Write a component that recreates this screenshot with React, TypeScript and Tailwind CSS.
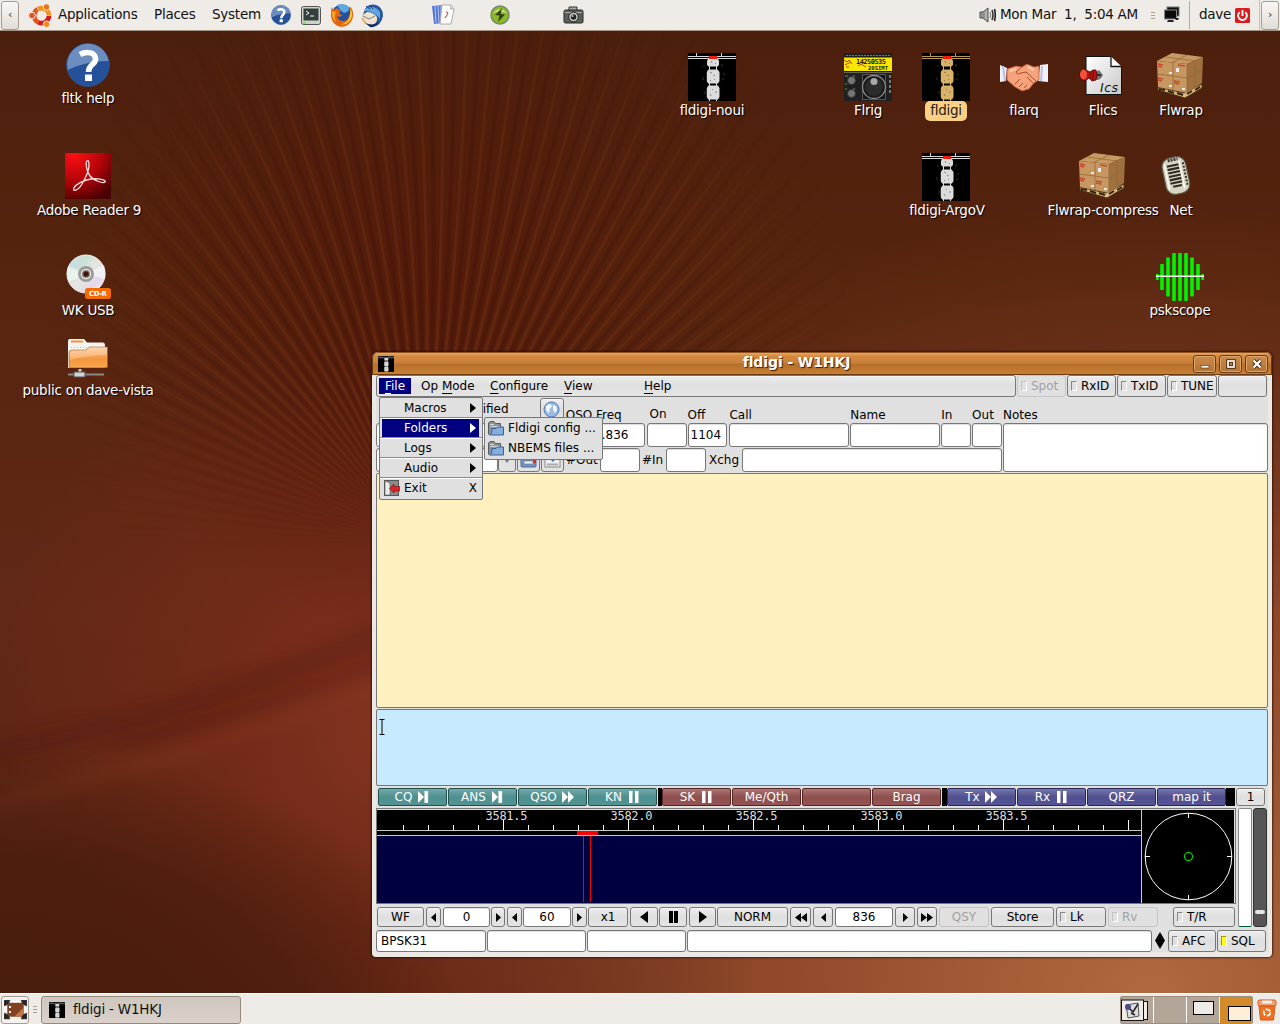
import React from "react";

type Kids = { children?: React.ReactNode; className?: string };

/* ---------- wallpaper ---------- */

function Wallpaper() {
  const rays: React.ReactNode[] = [];
  for (let i = 0; i < 150; i++) {
    const deg = 140 + i * 1.4;
    const a = (deg * Math.PI) / 180;
    const r = 640;
    const ex = 420 + Math.cos(a) * r;
    const ey = 540 + Math.sin(a) * r;
    const mx = 420 + Math.cos(a) * 280 + 25;
    const my = 540 + Math.sin(a) * 280 + 10;
    rays.push(
      <path key={i} d={`M420 540Q${mx} ${my} ${ex} ${ey}`} stroke={i % 2 ? "#2e0c05" : "#8a4a18"} strokeWidth={i % 2 ? 4 : 3} fill="none" />
    );
  }
  return (
    <svg className="absolute inset-0" width="1280" height="1024" viewBox="0 0 1280 1024">
      <defs>
        <linearGradient id="base" x1="0" y1="0" x2="0" y2="1">
          <stop offset="0" stopColor="#4b1e0c" />
          <stop offset=".3" stopColor="#57250f" />
          <stop offset=".6" stopColor="#612817" />
          <stop offset="1" stopColor="#532211" />
        </linearGradient>
        <radialGradient id="red" gradientUnits="userSpaceOnUse" cx="400" cy="730" r="420">
          <stop offset="0" stopColor="#853521" />
          <stop offset=".45" stopColor="#772b1a" stopOpacity=".75" />
          <stop offset="1" stopColor="#772b1a" stopOpacity="0" />
        </radialGradient>
        <radialGradient id="glow" gradientUnits="userSpaceOnUse" cx="1150" cy="1000" r="800">
          <stop offset="0" stopColor="#b06a41" />
          <stop offset=".5" stopColor="#944c2c" stopOpacity=".9" />
          <stop offset="1" stopColor="#7b3820" stopOpacity="0" />
        </radialGradient>
        <radialGradient id="corner" gradientUnits="userSpaceOnUse" cx="0" cy="0" r="1" gradientTransform="translate(20 1020) scale(440 270)">
          <stop offset="0" stopColor="#4a1c0b" />
          <stop offset=".6" stopColor="#4c1d0c" stopOpacity=".85" />
          <stop offset="1" stopColor="#4c1d0c" stopOpacity="0" />
        </radialGradient>
        <radialGradient id="fade" gradientUnits="userSpaceOnUse" cx="450" cy="330" r="400">
          <stop offset="0" stopColor="#fff" stopOpacity=".24" />
          <stop offset=".6" stopColor="#fff" stopOpacity=".16" />
          <stop offset="1" stopColor="#fff" stopOpacity="0" />
        </radialGradient>
        <radialGradient id="core" gradientUnits="userSpaceOnUse" cx="420" cy="300" r="330">
          <stop offset="0" stopColor="#541709" stopOpacity=".75" />
          <stop offset="1" stopColor="#541709" stopOpacity="0" />
        </radialGradient>
        <linearGradient id="cut" x1="0" y1="0" x2="0" y2="1">
          <stop offset=".38" stopColor="#fff" />
          <stop offset=".54" stopColor="#fff" stopOpacity="0" />
        </linearGradient>
        <mask id="rayMask" maskUnits="userSpaceOnUse" x="0" y="0" width="1280" height="1024">
          <rect width="1280" height="1024" fill="url(#fade)" />
        </mask>
        <mask id="cutMask" maskUnits="userSpaceOnUse" x="0" y="0" width="1280" height="1024">
          <rect width="1280" height="1024" fill="url(#cut)" />
        </mask>
        <filter id="soft" x="-20%" y="-60%" width="140%" height="220%"><feGaussianBlur stdDeviation="8" /></filter>
      </defs>
      <rect width="1280" height="1024" fill="url(#base)" />
      <rect width="1280" height="1024" fill="url(#red)" />
      <rect width="1280" height="1024" fill="url(#glow)" />
      <rect width="1280" height="1024" fill="url(#core)" />
      <rect width="1280" height="1024" fill="url(#corner)" />
      <g mask="url(#cutMask)"><g mask="url(#rayMask)">{rays}</g></g>
      <path d="M-20 745Q180 705 380 622V645Q220 715-20 765Z" fill="#4e180c" opacity=".35" filter="url(#soft)" />
      <path d="M-20 800Q180 745 380 665V690Q220 760-20 815Z" fill="#a14a2c" opacity=".12" filter="url(#soft)" />
      <path d="M120 735Q260 705 380 655V670Q250 725 120 750Z" fill="#4a160b" opacity=".3" filter="url(#soft)" />
    </svg>
  );
}

/* ---------- small drawings ---------- */

function SignalArt({ size, tone = "#dcdcdc", line = "#fff" }: { size: number; tone?: string; line?: string }) {
  return (
    <svg width={size} height={size} viewBox="0 0 48 48">
      <rect width="48" height="48" fill="#000" />
      <path d="M0 3.500H48M0 5.500H48M8.500 0V3M33.500 0V3" stroke={line} strokeWidth="1" opacity=".85" />
      <path d="M20 6H30L31 8V12L29.500 13.500H20.500L19 12V8ZM20.500 16.500H29.500L31.500 19V28L30 30.500H20L18.800 28V19ZM20.500 32.500H30L31.500 35V44L30 46.500H20L18.800 44V35Z" fill={tone} />
      <path d="M21.500 6V48M28.500 6V48" stroke={tone} strokeWidth="1" />
      <path d="M23 8l1 2M27 10l1 1M22 19l2 1M25 22l2 1M26 26l1 1M22 27l1 1M24 36l1 1M28 38v2M22 41l1 2" stroke="#555" strokeWidth=".9" opacity=".7" />
      <path d="M16 12v2M34 11v3M15 24v3M35 25v2M17 38v3M36 20v2" stroke="#555" strokeWidth="1" opacity=".6" />
      <rect x="21" y="3" width="8" height="3" fill="#f21b0c" />
    </svg>
  );
}

function HelpArt({ size }: { size: number }) {
  return (
    <svg width={size} height={size} viewBox="0 0 44 44">
      <circle cx="22" cy="22" r="21.300" fill="#24519a" stroke="#2d5796" />
      <path d="M1.500 25A20.500 20.500 0 0 1 42.500 18Q20 18 1.500 27Z" fill="#8ba6d0" opacity=".7" />
      <path d="M14 11.500Q17.500 9.500 21.500 9.500C30 9.500 31.500 17 27 21 24.500 23.200 22.500 24 22.500 29" fill="none" stroke="#fff" strokeWidth="5.500" />
      <rect x="19" y="31.500" width="7" height="6.500" fill="#fff" />
    </svg>
  );
}

function AdobeArt() {
  return (
    <svg width="46" height="46" viewBox="0 0 46 46">
      <defs>
        <radialGradient id="ad" cx=".2" cy="0" r="1.100">
          <stop offset="0" stopColor="#ff1014" /><stop offset=".55" stopColor="#b40509" /><stop offset="1" stopColor="#4a0103" />
        </radialGradient>
      </defs>
      <rect width="46" height="46" fill="url(#ad)" />
      <path d="M22 8C20 10 22 19 25 23S38 31 40 29 33 25 26 26 11 31 9 35 13 38 17 31 24 18 24 13 23.500 7 22 8Z" fill="none" stroke="#f3dede" strokeWidth="1.300" />
    </svg>
  );
}

function DiscArt() {
  return (
    <svg width="48" height="46" viewBox="0 0 48 46">
      <defs>
        <linearGradient id="cd" x1="0" y1="0" x2="1" y2="1">
          <stop offset="0" stopColor="#cdd8ee" /><stop offset=".3" stopColor="#c7e1d6" /><stop offset=".5" stopColor="#e6e6e0" /><stop offset=".75" stopColor="#e5d7ea" /><stop offset="1" stopColor="#f6f6f6" />
        </linearGradient>
      </defs>
      <circle cx="22" cy="20" r="19" fill="url(#cd)" stroke="#f3f3f3" />
      <path d="M22 20L40 11Q42 16 41 25ZM22 20L5 28Q2 22 4 12Z" fill="#fff" opacity=".55" />
      <circle cx="22" cy="20" r="8" fill="#999b9d" />
      <circle cx="22" cy="20" r="4.500" fill="#6a5448" stroke="#e8e8e8" strokeWidth="1.400" />
      <circle cx="22" cy="20" r="2.300" fill="#3a150a" />
      <rect x="21" y="34" width="26" height="11" rx="2.500" fill="#f66a05" />
      <text x="34" y="42" textAnchor="middle" fontSize="7" fontWeight="700" fill="#fff" fontFamily="DejaVu Sans, sans-serif" textLength="18">CD-R</text>
    </svg>
  );
}

function NetFolderArt() {
  return (
    <svg width="42" height="40" viewBox="0 0 42 40">
      <defs>
        <linearGradient id="nf" x1="0" y1="0" x2="0" y2="1"><stop offset="0" stopColor="#fbc795" /><stop offset=".6" stopColor="#f5963e" /><stop offset="1" stopColor="#f8a84f" /></linearGradient>
      </defs>
      <path d="M1 29V2Q1 0 3 0H17L20 3.500H36Q38 3.500 38 6V29Z" fill="#f5f3ef" />
      <rect x="4" y="1.500" width="12" height="2" fill="#f58f3f" />
      <path d="M4 8.500H36" stroke="#c0bbb2" strokeDasharray="1 2" />
      <path d="M2 28.500V14Q2 11 5 11H19L22.500 8H40.500V28.500Z" fill="url(#nf)" stroke="#9b6130" strokeWidth=".6" />
      <path d="M3 21Q20 16 40 16V8.500H23L19 11.500H5Q3 12 3 14Z" fill="#fff" opacity=".25" />
      <path d="M1 35.500H37" stroke="#888" strokeWidth="2" />
      <path d="M13 30V34" stroke="#ccc" strokeWidth="3" />
      <rect x="7" y="33" width="11" height="5" fill="#d3d3d3" stroke="#555" />
    </svg>
  );
}

function RigArt() {
  return (
    <svg width="48" height="48" viewBox="0 0 48 48">
      <rect width="48" height="48" fill="#202020" />
      <path d="M2 2.500H46" stroke="#777" strokeWidth="1.200" strokeDasharray="2 1" />
      <rect y="4.500" width="48" height="13.500" fill="#f8e800" />
      <path d="M0 7l3 2 2-2 3 4M1 12l6-3M2 14h3M14 13l3-2 5 3" stroke="#b3471d" fill="none" />
      <text x="12" y="10.500" fontSize="7" fontWeight="700" fill="#222" fontFamily="DejaVu Sans Mono, monospace" textLength="30">14250535</text>
      <text x="24" y="17" fontSize="5.500" fontWeight="700" fill="#222" fontFamily="DejaVu Sans Mono, monospace" textLength="20">20SIMT</text>
      <rect x="0" y="19" width="48" height="1" fill="#666" />
      <rect x="18.500" y="21.500" width="23" height="25" fill="#191919" stroke="#555" />
      <circle cx="30" cy="34" r="11.500" fill="#1b1b1b" stroke="#8b8b8b" strokeWidth="1.300" />
      <circle cx="30" cy="34" r="9" fill="#2c2c2c" /><circle cx="30" cy="28.500" r="3.500" fill="#a9a9a9" />
      <circle cx="7.500" cy="27.500" r="4" fill="#777" stroke="#333" /><circle cx="7.500" cy="40.500" r="4" fill="#777" stroke="#333" />
      <path d="M46 22v3M46 27v3M46 32v3M46 37v3" stroke="#7a7a7a" strokeWidth="2" />
      <path d="M1 23h3M9 23h2M1 36h2M9 36h2M1 31h2" stroke="#6c9a43" />
    </svg>
  );
}

function HandsArt() {
  return (
    <svg width="48" height="28" viewBox="0 0 48 28">
      <path d="M0 1L7 4 6 17 0 18Z" fill="#eef0fa" /><path d="M48 0L40 1 38 17 48 18Z" fill="#eef0fa" />
      <path d="M3 2l2 15M42 2l-1 15" stroke="#b9bfe0" strokeWidth="2" />
      <path d="M7 5L16 2 22 3 27 0 34 3 39 2 39 16 34 19 29 25 22 27 15 23 7 16Z" fill="#f6a27c" stroke="#b8552e" strokeWidth=".8" />
      <path d="M22 3L16 8Q17 11 21 9L26 8 36 17M15 20l5-5M19 23l4-4M24 24l3-3M27 13l6 6" fill="none" stroke="#a94c28" strokeWidth="1" />
      <path d="M10 7L16 5M28 3L34 6" stroke="#ffd0b2" strokeWidth="2" />
    </svg>
  );
}

function IcsArt() {
  return (
    <svg width="44" height="40" viewBox="0 0 44 40">
      <defs><linearGradient id="pg" x1="0" y1="0" x2="1" y2="1"><stop offset="0" stopColor="#fff" /><stop offset="1" stopColor="#c8c8c8" /></linearGradient></defs>
      <path d="M7 .5H32L42.500 11V38.500H7Z" fill="url(#pg)" stroke="#111" />
      <path d="M32 .5V10.500H42.500" fill="#fff" stroke="#111" strokeWidth="1.300" />
      <path d="M10 21Q20 28 24 19L20 14Z" fill="#000" opacity=".5" />
      <path d="M16 19H22" stroke="#333" strokeWidth="2" />
      <path d="M1 18Q2 12 7 14L11 16 14 14 17 14 18 19 17 24 13 25 10 22 6 25Q1 24 1 18Z" fill="#b5170e" stroke="#500" strokeWidth=".8" />
      <path d="M11 16V22M14 14V24" stroke="#6d0b06" />
      <ellipse cx="4.500" cy="18.500" rx="3.500" ry="5" fill="#f3513d" />
      <text x="21" y="36" fontSize="12.500" fontStyle="italic" fill="#111" fontFamily="DejaVu Sans, sans-serif" textLength="18">Ics</text>
    </svg>
  );
}

function BoxesArt() {
  return (
    <svg width="48" height="46" viewBox="0 0 48 46">
      <path d="M2 34L28 40 46 31 46 35 29 45 2 37Z" fill="#d8bc80" stroke="#4a3318" />
      <path d="M3 36l6 1M12 38l6 2M21 40l6 2M31 41l5-3M39 37l5-3" stroke="#33200d" strokeWidth="2" />
      <path d="M1 8L16 0 47 4 31 11Z" fill="#c79a63" />
      <path d="M1 8L31 11V40L2 34Z" fill="#c69760" />
      <path d="M31 11L47 4 46 30 31 40Z" fill="#a0713e" />
      <path d="M17 9.500V37M1 21L31 25 46.500 17M9 4L39 8M31 2L16 9.500M39 8V35M31 11V40" stroke="#8f6436" strokeWidth=".7" fill="none" />
      <path d="M2 11l5 1M2 13l4 1M2 25l5 1M2 27l4 1M18 28l6 1M18 30l5 1M22 12l7 1" stroke="#c64a32" strokeWidth="1.300" />
      <rect x="20" y="15" width="3" height="4" fill="#eee" /><rect x="13" y="19" width="3" height="2" fill="#eee" /><rect x="13" y="32" width="3" height="2" fill="#eee" /><rect x="26" y="35" width="3" height="2" fill="#eee" />
    </svg>
  );
}

function MicArt() {
  return (
    <svg width="30" height="40" viewBox="0 0 30 40">
      <rect x="3" y="1" width="24" height="37" rx="9" fill="#d8d4c4" stroke="#5b5647" strokeWidth="1.200" transform="rotate(-12 15 20)" />
      <g transform="rotate(-12 15 20)">
        <path d="M10 3.500H20" stroke="#37352b" strokeWidth="3" strokeDasharray="2 1" />
        <path d="M8 9h12M8 12.500h12M8 16h12M8 19.500h12M8 23h12M8 26.500h12M10 30h9" stroke="#2d2b22" strokeWidth="2.100" />
        <path d="M6 6V32M21 5V34" stroke="#fffef2" strokeWidth="1.500" />
        <path d="M24.500 8V32" stroke="#37352b" strokeWidth="2" strokeDasharray="2 1.500" />
      </g>
    </svg>
  );
}

function ScopeArt() {
  const bars: [number, number][] = [[1, 3], [6, 13], [12, 19.500], [18, 24], [24, 24], [30, 24], [36, 19.500], [42, 13], [47, 3]];
  return (
    <svg width="48" height="48" viewBox="0 0 48 48">
      {bars.map(([x, h]) => (
        <rect key={x} x={x - 1.8} y={24 - h} width="3.600" height={h * 2} rx=".8" fill="#00f400" />
      ))}
      <rect y="22.500" width="48" height="1.500" fill="#f2fff0" />
    </svg>
  );
}

/* ---------- desktop icons ---------- */

const desktopIcons: { x: number; y: number; h: number; label: string; art: React.ReactNode; sel?: boolean; dx?: string }[] = [
  { x: 88, y: 43, h: 45, label: "fltk help", art: <HelpArt size={44} /> },
  { x: 89, y: 153, h: 47, label: "Adobe Reader 9", art: <AdobeArt />, dx: "-ml-[2px]" },
  { x: 88, y: 254, h: 46, label: "WK USB", art: <DiscArt /> },
  { x: 88, y: 339, h: 41, label: "public on dave-vista", art: <NetFolderArt /> },
  { x: 712, y: 53, h: 47, label: "fldigi-noui", art: <SignalArt size={48} /> },
  { x: 868, y: 53, h: 47, label: "Flrig", art: <RigArt /> },
  { x: 946, y: 53, h: 48, label: "fldigi", art: <SignalArt size={48} tone="#d9b26a" line="#d9b26a" />, sel: true },
  { x: 1024, y: 64, h: 36, label: "flarq", art: <HandsArt /> },
  { x: 1103, y: 56, h: 44, label: "Flics", art: <IcsArt />, dx: "-ml-[5px]" },
  { x: 1181, y: 53, h: 47, label: "Flwrap", art: <BoxesArt />, dx: "-ml-[2px]" },
  { x: 947, y: 153, h: 47, label: "fldigi-ArgoV", art: <SignalArt size={48} />, dx: "-ml-[2px]" },
  { x: 1103, y: 153, h: 47, label: "Flwrap-compress", art: <BoxesArt />, dx: "-ml-[2px]" },
  { x: 1181, y: 156, h: 44, label: "Net", art: <MicArt />, dx: "-ml-[10px]" },
  { x: 1180, y: 253, h: 47, label: "pskscope", art: <ScopeArt /> },
];

function DesktopIcon({ i }: { i: (typeof desktopIcons)[number] }) {
  return (
    <div className="absolute flex w-[160px] -translate-x-1/2 flex-col items-center" style={{ left: i.x, top: i.y }}>
      <div className={i.dx} style={{ height: i.h }}>{i.art}</div>
      <div
        className={
          "whitespace-nowrap text-[13.500px] leading-[18px] tracking-[-0.25px] " +
          (i.sel ? "rounded-[5px] bg-[#fbd083] px-[5px] pb-[2px] text-[#222]" : "pt-px text-white [text-shadow:1px_1px_1px_#000]")
        }
      >
        {i.label}
      </div>
    </div>
  );
}

/* ---------- panels ---------- */

function EdgeButton({ children }: Kids) {
  return (
    <div className="flex h-[29px] w-[18px] shrink-0 items-center justify-center rounded-[3px] border border-[#a59d94] bg-gradient-to-b from-[#f8f6f4] to-[#e2ddd8] text-[11px] text-[#333]">
      {children}
    </div>
  );
}

function Grip() {
  return (
    <div className="flex w-[4px] flex-col gap-[2px]">
      <i className="h-px bg-[#a99d90]" /><i className="h-px bg-[#a99d90]" /><i className="h-px bg-[#a99d90]" />
    </div>
  );
}

function TopPanel() {
  return (
    <div className="absolute inset-x-0 top-0 flex h-[31px] items-center border-b border-[#a69485] bg-[#efebe7] px-px text-[13.500px] tracking-[-0.25px] text-[#111] [&>span]:-mt-[2px]">
      <EdgeButton>‹</EdgeButton>
      <svg className="ml-[9px] w-[26px] shrink-0" height="25" viewBox="0 0 26 25">
        <g fill="none" strokeWidth="4.600">
          <path d="M10.800 19.600A7.500 7.500 0 0 1 9.500 6.300" stroke="#e8521c" />
          <path d="M10 6A7.500 7.500 0 0 1 21 12.200" stroke="#f2931d" />
          <path d="M21 12.800A7.500 7.500 0 0 1 10.500 19.500" stroke="#d4181b" />
        </g>
        <g stroke="#efebe7" strokeWidth="1">
          <circle cx="4" cy="12.500" r="3.300" fill="#e8521c" /><circle cx="18.500" cy="4" r="3.300" fill="#e8731d" /><circle cx="18.500" cy="21.200" r="3.300" fill="#f08a1c" />
        </g>
      </svg>
      <span className="ml-[4px] w-[96px]">Applications</span>
      <span className="w-[58px]">Places</span>
      <span className="w-[59px]">System</span>
      <HelpArt size={20} />
      <svg className="ml-[10px]" width="20" height="19" viewBox="0 0 20 19">
        <rect x=".5" y=".5" width="19" height="18" rx="2" fill="#d0d0cb" stroke="#555" /><rect x="2.500" y="2.500" width="15" height="12" fill="#31403c" />
        <path d="M5 5l3 2-3 2M9 10h4" stroke="#fff" fill="none" /><rect x="2.500" y="16" width="2" height="1.500" fill="#5bdc2e" />
      </svg>
      <svg className="ml-[9px]" width="24" height="25" viewBox="0 0 24 25">
        <circle cx="12" cy="12" r="10.500" fill="#23509f" />
        <path d="M7 2Q14-1 19 4 20 9 14 10L10 7Z" fill="#5aa9e0" />
        <path d="M1.500 4Q1 8 1 13 2 21 9 23.500 17 25 21.500 18 24.500 12 22 6 21 4 19.500 3.500 21 9 19 13 18 18 13 18 8 17.500 7 13 10 14.500 12.500 12.500 11 11 9.500 11 9 9 11 8 8 7.500 7.500 5 5 6 4 7 2.500 6 1.500 4Z" fill="#e4650f" />
        <path d="M20 5Q24 11 20.500 17 17 22 11 21.500 19 19 20 12 20.500 9 20 5Z" fill="#fbc62c" />
        <path d="M2 8Q1 15 6 19 4 13 6 9Z" fill="#f7a321" />
      </svg>
      <svg className="ml-[6px]" width="24" height="25" viewBox="0 0 24 25">
        <path d="M4 9Q6 1 14 1.500 23 3 23 13 21 23 13 23.500 5 23 2 14Z" fill="#27569f" />
        <path d="M1 13L7 9Q13 9 17 14 18 20 12 22 4 22 1 13Z" fill="#efe3cc" /><path d="M3 13L9 16 15 13" stroke="#7c7c8b" fill="none" />
        <path d="M5 6Q14 1 20 9L20 16Q14 8 5 8Z" fill="#60a5de" /><path d="M6 3l4 3M9 2l4 4" stroke="#1b3c7c" /><path d="M3 18Q12 25 20 18 16 25 10 24Z" fill="#152c62" /><path d="M2 15l4 6" stroke="#ddb265" strokeWidth="2" />
      </svg>
      <svg className="ml-[47px]" width="24" height="22" viewBox="0 0 24 22">
        <path d="M1 2L13 1 11 19 3 20Z" fill="#5475d2" /><path d="M4 2l1 17M7 2l1 17M10 2v17" stroke="#b7c6f4" />
        <path d="M11 1H20L23 5 20 20H9Z" fill="#fff" stroke="#999" strokeWidth=".8" /><path d="M20 1L19 5H23" fill="#ddd" stroke="#999" strokeWidth=".6" /><path d="M15 8Q18 8 16 11L14 14" stroke="#c25b51" strokeWidth="1.200" fill="none" />
      </svg>
      <svg className="ml-[35px]" width="20" height="20" viewBox="0 0 20 20">
        <circle cx="10" cy="10" r="9" fill="#8ab926" stroke="#788b6c" strokeWidth="1.500" /><path d="M3 8Q10 0 17 8Q10 6 3 8Z" fill="#d7eda0" opacity=".7" />
        <path d="M12 3L5 10 9.500 10.500 8 17 15 9.500 10.500 9Z" fill="#333f15" />
      </svg>
      <svg className="ml-[53px]" width="21" height="19" viewBox="0 0 21 19">
        <path d="M6 4V1H14V4" fill="#aaa" stroke="#333" /><rect x="1" y="4" width="19" height="13" rx="1.500" fill="#5c605a" stroke="#262926" /><path d="M2 6.500H19" stroke="#aaada5" />
        <circle cx="10.500" cy="11" r="4.800" fill="#c9ccc6" stroke="#222" /><circle cx="10.500" cy="11" r="2.800" fill="#222" /><circle cx="9.500" cy="10" r="1" fill="#ddd" />
      </svg>
      <div className="flex-1" />
      <svg className="mr-[4px]" width="17" height="16" viewBox="0 0 17 16">
        <path d="M1 5H4L9 1V15L4 11H1Z" fill="#b3b3ae" stroke="#4b4b48" /><path d="M3 5v6M5 5v6" stroke="#555" strokeWidth=".7" /><path d="M11 5Q12.500 8 11 11" stroke="#777" fill="none" /><path d="M13 3Q15 8 13 13" stroke="#333" strokeWidth="1.600" fill="none" /><path d="M15.500 2Q17 8 15.500 14" stroke="#222" strokeWidth="1.600" fill="none" />
      </svg>
      <span className="w-[151px] whitespace-pre tracking-[-0.3px]">Mon Mar  1,  5:04 AM</span>
      <Grip />
      <svg className="ml-[8px]" width="18" height="18" viewBox="0 0 18 18">
        <rect x="4" y="1" width="12" height="9" fill="#111" stroke="#777" /><rect x="1.500" y="4" width="12" height="9" fill="#0b0b0b" stroke="#888" /><path d="M5 14h5l1 2H4zM12 12h4l-1 2h-2" fill="#222" />
      </svg>
      <div className="ml-[8px] h-[28px] w-px bg-[#b5a99d]" />
      <span className="ml-[9px] w-[36px]">dave</span>
      <svg width="15" height="15" viewBox="0 0 15 15">
        <rect width="15" height="15" rx="1.500" fill="#dc1c1c" /><path d="M4.700 4.200A4.400 4.400 0 1 0 10.300 4.200M7.500 2V8" stroke="#fff" strokeWidth="1.900" fill="none" />
      </svg>
      <div className="ml-[9px] mr-px h-[30px] w-px bg-[#c8beb4]" />
      <EdgeButton>›</EdgeButton>
    </div>
  );
}

function BottomPanel() {
  return (
    <div className="absolute inset-x-0 bottom-0 flex h-[31px] items-center border-t border-white bg-[#efebe7] pt-px text-[13.500px] text-[#111]">
      <div className="ml-px flex h-[28px] w-[28px] items-center justify-center rounded-[3px] border border-[#a59d94] bg-[#f4f1ee]">
        <svg width="23" height="20" viewBox="0 0 23 20">
          <rect x="2.500" y="2" width="18" height="15.500" fill="#834021" stroke="#fff" strokeWidth="1.500" /><path d="M10 17L20 7V17Z" fill="#c17749" />
          <path d="M0 0h6l-1 3-2 2-3 1zM23 0h-6l1 3 2 2 3 1zM0 19v-6l3 1 2 2 1 3zM23 19v-6l-3 1-2 2-1 3z" fill="#252525" stroke="#555" strokeWidth=".6" /><path d="M5 6h2v2H5zM5 11h2v2H5z" fill="#fff" />
        </svg>
      </div>
      <div className="ml-[4px]"><Grip /></div>
      <div className="ml-[4px] flex h-[28px] w-[200px] items-center rounded-[3px] border border-[#95897c] bg-gradient-to-b from-[#cfc6be] to-[#d9d1ca] pl-[7px]">
        <SignalArt size={16} />
        <span className="ml-[8px] tracking-[-0.200px]">fldigi - W1HKJ</span>
      </div>
      <div className="flex-1" />
      <div className="flex h-[28px] w-[133px] overflow-hidden rounded-[2px] border border-[#9b8e81] bg-[#b3a698]">
        <div className="flex w-[33px] items-center border-r border-white">
          <svg width="28" height="22" viewBox="0 0 28 22">
            <rect x="5.500" y="2.500" width="21" height="18" fill="#efebe7" stroke="#111" /><rect x=".5" y="1" width="22" height="20.500" fill="#efebe7" stroke="#111" />
            <path d="M5 6L17 4 18 17 7 19Z" fill="#ddd" stroke="#555" /><circle cx="7" cy="8" r="3" fill="#4b4b85" /><path d="M9 10l3 3 5-8M10 14l4 2" stroke="#222" strokeWidth="1.500" fill="none" />
          </svg>
        </div>
        <div className="w-[33px] border-r border-white" />
        <div className="w-[33px] border-r border-white pl-[6px] pt-[4px]"><div className="h-[14px] w-[21px] border border-black bg-[#efebe7]" /></div>
        <div className="flex-1 bg-[#d58a2a] pl-[8px] pt-[9px]"><div className="h-[15px] w-[23px] border border-black bg-[#ffedd6]" /></div>
      </div>
      <svg className="ml-[4px] mr-[3px]" width="20" height="22" viewBox="0 0 20 22">
        <rect x="1" y="1" width="18" height="6" rx="1.500" fill="#f0a370" stroke="#d4591d" /><rect x="5" y="1.500" width="10" height="3" fill="#eee" />
        <path d="M2 7H18L16.500 21H3.500Z" fill="#ee711f" stroke="#d4591d" /><circle cx="10" cy="13.500" r="3.200" fill="none" stroke="#fff" strokeWidth="1.800" strokeDasharray="5 1.700" />
      </svg>
    </div>
  );
}

/* ---------- window widgets ---------- */

const raised = "rounded-[3px] border border-[#777] bg-gradient-to-b from-[#ededed] via-[#dfdfdf] to-[#e4e4e4] shadow-[inset_0_1px_0_#f6f6f6] ";

function Btn({ children, className = "", dim }: Kids & { dim?: boolean }) {
  return (
    <div className={(dim ? "rounded-[3px] border border-[#c2c2c2] bg-[#e0e0e0] text-[#a0a0a0] " : raised) + "flex shrink-0 items-center justify-center " + className}>
      {children}
    </div>
  );
}

function LightBtn({ label, className = "", dim, on }: { label: string; className?: string; dim?: boolean; on?: boolean }) {
  return (
    <div className={(dim ? "rounded-[3px] border border-[#c6c6c6] bg-[#e0e0e0] text-[#a0a0a0] " : raised) + "flex shrink-0 items-center gap-[4px] whitespace-nowrap pl-[3px] " + className}>
      <i className={"h-[10px] w-[6px] shrink-0 border-b border-l border-r border-t border-b-white border-r-white " + (on ? "border-l-[#a90] border-t-[#a90] bg-[#ffff00]" : dim ? "border-l-[#c4c4c4] border-t-[#c4c4c4]" : "border-l-[#888] border-t-[#888]")} />
      {label}
    </div>
  );
}

function Field({ children, className = "" }: Kids) {
  return <div className={"flex shrink-0 items-center rounded-[3px] border border-[#777] bg-white shadow-[inset_0_1px_1px_#ddd] " + className}>{children}</div>;
}

function Tri({ dir, double, big }: { dir: "l" | "r"; double?: boolean; big?: boolean }) {
  const w = big ? 8 : double ? 6 : 5;
  const h = big ? 12 : 9;
  const one = dir === "l" ? `M${w} 0V${h}L0 ${h / 2}Z` : `M0 0V${h}L${w} ${h / 2}Z`;
  return (
    <svg width={double ? w * 2 : w} height={h} viewBox={`0 0 ${double ? w * 2 : w} ${h}`}>
      <path d={one} />
      {double && <path d={one} transform={`translate(${w} 0)`} />}
    </svg>
  );
}

function MacroSymbol({ kind }: { kind: string }) {
  return (
    <svg width="13" height="12" viewBox="0 0 13 12" fill="#fff">
      {kind === "end" && <><path d="M1 0L7 6 1 12Z" /><rect x="7.500" width="3.500" height="12" stroke="#ccc" strokeWidth=".5" /></>}
      {kind === "ff" && <><path d="M0 0L6 6 0 12Z" /><path d="M6 0L12 6 6 12Z" /></>}
      {kind === "pause" && <><rect x="2" width="3.500" height="12" /><rect x="8" width="3.500" height="12" /></>}
    </svg>
  );
}

function Macro({ label, kind, tone }: { label: string; kind?: string; tone: "t" | "r" | "b" }) {
  const c = tone === "t"
    ? "border-[#24504e] from-[#72a9a8] via-[#4e9090] to-[#529494]"
    : tone === "r"
      ? "border-[#552525] from-[#aa7575] via-[#8f4f4f] to-[#955353]"
      : "border-[#27275b] from-[#7777ad] via-[#50508f] to-[#555596]";
  return (
    <div className={"mr-px flex h-[18px] w-[69px] shrink-0 items-center justify-center gap-[5px] rounded-[2px] border bg-gradient-to-b text-[12px] text-white " + c}>
      {label}
      {kind && <MacroSymbol kind={kind} />}
    </div>
  );
}

function Title() {
  const b = "flex h-[18px] w-[23px] items-center justify-center rounded-[3px] border border-[#6b3b12] bg-gradient-to-b from-[#c98b4d] to-[#b67332] shadow-[inset_0_0_0_1px_#dca76e]";
  return (
    <div className="flex h-[23px] shrink-0 items-center rounded-t-[6px] border-x border-b border-t border-[#6b3b12] border-t-[#8c5220] bg-[linear-gradient(#eba75e_0,#d4893f_15%,#c9803a_48%,#b66f2b_52%,#c87f35_100%)] pl-[5px] pr-[3px]">
      <SignalArt size={16} />
      <div className="flex-1 pb-[3px] pr-px text-center text-[14px] font-bold tracking-[-0.1px] text-white [text-shadow:1px_1px_1px_#3a1c05]">fldigi - W1HKJ</div>
      <div className="-ml-[7px] flex gap-[3px]">
        <div className={b}><svg width="10" height="10"><rect x="1" y="6.500" width="8" height="2.500" fill="#fff" stroke="#4a2a0d" strokeWidth=".6" /></svg></div>
        <div className={b}><svg width="10" height="10"><rect x="2" y="2" width="6" height="6" fill="none" stroke="#3b210a" strokeWidth="3.400" /><rect x="2" y="2" width="6" height="6" fill="none" stroke="#fff" strokeWidth="1.700" /></svg></div>
        <div className={b}><svg width="10" height="10"><path d="M1.500 1.500l7 7M8.500 1.500l-7 7" stroke="#3b210a" strokeWidth="4" /><path d="M1.500 1.500l7 7M8.500 1.500l-7 7" stroke="#fff" strokeWidth="2.400" /></svg></div>
      </div>
    </div>
  );
}

function MenuBar() {
  const u = "underline decoration-1 underline-offset-[3px]";
  return (
    <div className="flex h-[22px] gap-[1px]">
      <div className={raised + "flex w-[640px] shrink-0 items-center pl-[2px]"}>
        <div className="mr-[10px] flex h-[16px] w-[32px] items-center justify-center bg-[#000080] text-white"><span><span className={u}>F</span>ile</span></div>
        <span className="w-[69px] whitespace-nowrap">Op <span className={u}>M</span>ode</span>
        <span className="w-[74px]"><span className={u}>C</span>onfigure</span>
        <span className="w-[80px]"><span className={u}>V</span>iew</span>
        <span><span className={u}>H</span>elp</span>
      </div>
      <LightBtn label="Spot" dim className="w-[49px]" />
      <LightBtn label="RxID" className="w-[49px]" />
      <LightBtn label="TxID" className="w-[49px]" />
      <LightBtn label="TUNE" className="w-[50px]" />
      <Btn className="w-[49px]" />
    </div>
  );
}

function GlobeArt() {
  return (
    <svg width="17" height="17" viewBox="0 0 17 17"><circle cx="8.500" cy="8.500" r="7.500" fill="#9dbce2" stroke="#4e76b0" /><path d="M3 5l3-2 3 1-1 3-2 1 1 2-2 2-2-4zM10 4l3 1 1 4-2 3-2-3z" fill="#f4f9ff" /></svg>
  );
}

function LogFields() {
  const lab = "block h-[16px] leading-[17px] whitespace-nowrap";
  return (
    <div className="flex h-[76px] items-end gap-px pb-px">
      <div className="flex w-[626px] flex-col">
        <div className="flex items-end gap-px">
          <div className="flex h-[49px] w-[187px] flex-col justify-between">
            <div className="-mr-px flex h-[23px] items-center justify-between pl-[102px]">
              <span className="pb-[2px]">tified</span>
              <Btn className="h-[23px] w-[24px]"><GlobeArt /></Btn>
            </div>
            <Field className="h-[24px] w-full" />
          </div>
          <div className="w-[82px] pl-[2px]"><span className={lab}>QSO Freq</span><Field className="-ml-[2px] h-[24px] w-[81px] pl-[37px]">.836</Field></div>
          <div className="w-[40px]"><span className={lab + " -mt-px mb-px pl-[3px]"}>On</span><Field className="h-[24px]" /></div>
          <div className="w-[40px]"><span className={lab}>Off</span><Field className="h-[24px] pl-[2px]">1104</Field></div>
          <div className="ml-px w-[120px]"><span className={lab}>Call</span><Field className="h-[24px]" /></div>
          <div className="w-[90px]"><span className={lab}>Name</span><Field className="h-[24px]" /></div>
          <div className="w-[30px]"><span className={lab}>In</span><Field className="h-[24px]" /></div>
          <div className="w-[30px]"><span className={lab}>Out</span><Field className="h-[24px]" /></div>
        </div>
        <div className="mt-px flex h-[24px] items-center">
          <Field className="h-[24px] w-[122px]" />
          <Btn className="h-[24px] w-[18px]"><svg width="8" height="6"><path d="M0 0H8L4 6Z" fill="#777" /></svg></Btn>
          <Btn className="ml-px h-[24px] w-[23px]"><svg width="17" height="16"><rect x="1" y="3" width="15" height="12" rx="1" fill="#7594c6" stroke="#4a68a0" /><rect x="4" y="9" width="9" height="3" fill="#eee" stroke="#777" strokeWidth=".6" /><path d="M14.500 2v9" stroke="#d22" strokeWidth="2.500" /></svg></Btn>
          <Btn className="ml-px h-[24px] w-[23px]"><svg width="17" height="16"><rect x="1" y="1" width="15" height="14" fill="#eee" stroke="#888" /><path d="M5 6h7l-3 4z" fill="#27a" /><path d="M3 12.500h11" stroke="#aaa" strokeWidth="2" /></svg></Btn>
          <span className="w-[36px] pl-[2px]">#Out</span>
          <Field className="h-[24px] w-[40px]" />
          <span className="w-[26px] pl-[2px]">#In</span>
          <Field className="h-[24px] w-[40px]" />
          <span className="w-[36px] pl-[3px]">Xchg</span>
          <Field className="h-[24px] w-[260px]" />
        </div>
      </div>
      <div className="flex-1"><span className={lab}>Notes</span><Field className="h-[49px]" /></div>
    </div>
  );
}

function Waterfall() {
  const ticks = Array.from({ length: 30 }, (_, k) => 26.5 + k * 25);
  return (
    <svg width="764" height="93" viewBox="0 0 764 93" shapeRendering="crispEdges">
      <rect width="764" height="93" fill="#000" />
      <rect y="26" width="764" height="67" fill="#000040" />
      {ticks.map((x, k) => (
        <path key={k} d={`M${x} ${k % 5 === 4 ? 10 : 15}V20`} stroke="#fff" />
      ))}
      <path d="M0 20.500H764M0 25.500H764" stroke="#c8c8c8" />
      <rect x="200" y="21" width="21" height="4" fill="#f00" />
      <path d="M206.500 26V92M213.500 26V92" stroke="#f00000" />
      {["3581.5", "3582.0", "3582.5", "3583.0", "3583.5"].map((t, k) => (
        <text key={t} x={108.5 + k * 125} y="10" fontSize="12" fill="#dedede" fontFamily="DejaVu Sans Mono, monospace" textLength="42">{t}</text>
      ))}
    </svg>
  );
}

function PhaseScope() {
  return (
    <svg width="92" height="93" viewBox="0 0 92 93">
      <rect width="92" height="93" fill="#000" />
      <circle cx="46.500" cy="46.500" r="43.300" fill="none" stroke="#fff" />
      <path d="M46.500 3V8M46.500 85V90M3 46.500H8M85 46.500H90" stroke="#fff" />
      <circle cx="46.500" cy="46.500" r="4" fill="none" stroke="#00e000" strokeWidth="1.200" />
    </svg>
  );
}

function Controls() {
  return (
    <div className="mt-[3px] flex h-[20px] w-[860px] gap-[2px] pl-px [&>*]:h-[20px]">
      <Btn className="w-[47px]">WF</Btn>
      <Btn className="w-[15px]"><Tri dir="l" /></Btn>
      <Field className="w-[47px] justify-center">0</Field>
      <Btn className="-ml-px w-[14px]"><Tri dir="r" /></Btn>
      <Btn className="w-[15px]"><Tri dir="l" /></Btn>
      <Field className="-ml-px w-[48px] justify-center">60</Field>
      <Btn className="-ml-px w-[15px]"><Tri dir="r" /></Btn>
      <Btn className="-ml-px w-[40px]">x1</Btn>
      <Btn className="w-[28px]"><Tri dir="l" big /></Btn>
      <Btn className="-ml-px w-[28px]"><svg width="9" height="12"><rect width="4" height="12" /><rect x="5" width="4" height="12" /></svg></Btn>
      <Btn className="w-[27px]"><Tri dir="r" big /></Btn>
      <Btn className="-ml-px w-[71px]">NORM</Btn>
      <Btn className="w-[21px]"><Tri dir="l" double /></Btn>
      <Btn className="w-[20px]"><Tri dir="l" /></Btn>
      <Field className="w-[58px] justify-center">836</Field>
      <Btn className="w-[20px]"><Tri dir="r" /></Btn>
      <Btn className="w-[20px]"><Tri dir="r" double /></Btn>
      <Btn dim className="w-[50px]">QSY</Btn>
      <Btn className="w-[63px]">Store</Btn>
      <LightBtn label="Lk" className="w-[50px]" />
      <LightBtn dim label="Rv" className="w-[50px]" />
      <LightBtn label="T/R" className="ml-[13px] w-[62px]" />
    </div>
  );
}

function MenuItem({ label, hot, last, icon, hint }: { label: string; hot?: boolean; last?: boolean; icon?: React.ReactNode; hint?: string }) {
  return (
    <div className={"flex h-[20px] items-center pl-[2px] pr-[3px] " + (last ? "" : "border-b border-[#8a8a8a] shadow-[0_1px_0_#fff]")}>
      <div className={"flex h-[18px] flex-1 items-center " + (hot ? "bg-[#000080] text-white" : "text-black")}>
        <span className="flex w-[22px]">{icon}</span>
        <span className="flex-1">{label}</span>
        {hint ? <span className="mr-[2px]">{hint}</span> : <svg className="mr-[3px]" width="6" height="10"><path d="M0 0L6 5 0 10Z" fill="currentColor" /></svg>}
      </div>
    </div>
  );
}

function FolderArt() {
  return (
    <svg width="16" height="15" viewBox="0 0 16 15"><path d="M.5 13.500V2L2 .5H6L7.500 2.500H12.500V12" fill="#8d9397" stroke="#555b60" /><path d="M2 3.500H6M2.500 5.500H12" stroke="#d5d8da" /><path d="M1.500 14L3.500 12 4 7.500H8L9.500 6H15.500V14Z" fill="#86aedd" stroke="#396098" /></svg>
  );
}

function ExitArt() {
  return (
    <svg width="17" height="16" viewBox="0 0 17 16"><rect x=".5" y=".5" width="14" height="15" fill="#8b8b8b" stroke="#555" /><path d="M1 1L6 3V15H1Z" fill="#eee" stroke="#666" strokeWidth=".7" /><path d="M5.500 8.500L10 4V6.500H15.500V11H10V13Z" fill="#dc2525" stroke="#8d1010" strokeWidth=".7" /></svg>
  );
}

function Menus() {
  return (
    <>
      <div className="absolute left-[7px] top-[45px] h-[103px] w-[104px] rounded-[2px] border border-[#777] bg-[#e0e0e0]">
        <MenuItem label="Macros" />
        <MenuItem label="Folders" hot />
        <MenuItem label="Logs" />
        <MenuItem label="Audio" />
        <MenuItem label="Exit" last icon={<span className="ml-[2px]"><ExitArt /></span>} hint="X" />
      </div>
      <div className="absolute left-[112px] top-[65px] flex h-[43px] w-[119px] flex-col rounded-[2px] border border-[#777] bg-[#e0e0e0]">
        {["Fldigi config ...", "NBEMS files ..."].map((t) => (
          <div key={t} className="flex h-[20px] items-center gap-[4px] whitespace-nowrap pl-[3px]"><FolderArt />{t}</div>
        ))}
      </div>
    </>
  );
}

function FldigiWindow() {
  return (
    <div className="absolute left-[372px] top-[352px] flex h-[605px] w-[900px] flex-col rounded-b-[4px] rounded-t-[6px] bg-[#ece9e4] text-[12px] leading-[14px] text-black shadow-[0_0_2px_1px_rgba(30,8,0,.65)]">
      <Title />
      <div className="ml-[4px] flex w-[892px] flex-col bg-[#e0e0e0]">
        <MenuBar />
        <LogFields />
        <div className="h-[235px] rounded-[2px] border border-[#777] bg-[#fff0bf]" />
        <div className="mt-px h-[77px] rounded-[2px] border border-[#777] bg-[#c8eaff] pl-[2px] pt-[9px]">
          <svg width="6" height="16"><path d="M.5 .5H5.500M.5 15.500H5.500M3 1V15" stroke="#000" /></svg>
        </div>
        <div className="mt-[2px] flex h-[18px] pl-[2px]">
          <Macro tone="t" label="CQ" kind="end" /><Macro tone="t" label="ANS" kind="end" /><Macro tone="t" label="QSO" kind="ff" /><Macro tone="t" label="KN" kind="pause" />
          <i className="w-[4px] bg-black" />
          <Macro tone="r" label="SK" kind="pause" /><Macro tone="r" label="Me/Qth" /><Macro tone="r" label="" /><Macro tone="r" label="Brag" />
          <i className="w-[5px] bg-black" />
          <Macro tone="b" label="Tx" kind="ff" /><Macro tone="b" label="Rx" kind="pause" /><Macro tone="b" label="QRZ" /><Macro tone="b" label="map it" />
          <i className="-ml-px w-[9px] bg-black" />
          <Btn className="ml-px w-[29px]">1</Btn>
        </div>
        <div className="mt-[2px] flex h-[120px] gap-px">
          <div className="w-[860px]">
            <div className="flex h-[96px] border border-[#777] pt-px">
              <Waterfall />
              <div className="w-px bg-[#ccc]" />
              <PhaseScope />
            </div>
            <Controls />
          </div>
          <div className="ml-px h-[119px] w-[14px] rounded-[2px] border border-[#888] border-b-[#053] bg-white" />
          <div className="flex h-[119px] w-[14px] items-end justify-center rounded-[3px] border border-[#333] bg-[#555] pb-[12px]">
            <i className="h-[4px] w-[10px] rounded-[2px] bg-[#e6e6e6]" />
          </div>
        </div>
        <div className="mt-[2px] flex h-[22px] gap-px">
          <Field className="w-[110px] pl-[4px]">BPSK31</Field>
          <Field className="w-[99px]" />
          <Field className="w-[99px]" />
          <Field className="w-[465px]" />
          <svg className="mx-px" width="12" height="21" viewBox="0 0 12 21"><path d="M6 2L11 10.500 6 19 1 10.500Z" /></svg>
          <LightBtn label="AFC" className="w-[48px]" />
          <LightBtn label="SQL" on className="w-[49px]" />
        </div>
      </div>
      <Menus />
    </div>
  );
}

export default function App() {
  return (
    <div className="relative h-[1024px] w-[1280px] overflow-hidden bg-[#4b1e0c] [font-family:'DejaVu_Sans',sans-serif]">
      <Wallpaper />
      {desktopIcons.map((i) => (
        <DesktopIcon key={i.label} i={i} />
      ))}
      <FldigiWindow />
      <TopPanel />
      <BottomPanel />
    </div>
  );
}
